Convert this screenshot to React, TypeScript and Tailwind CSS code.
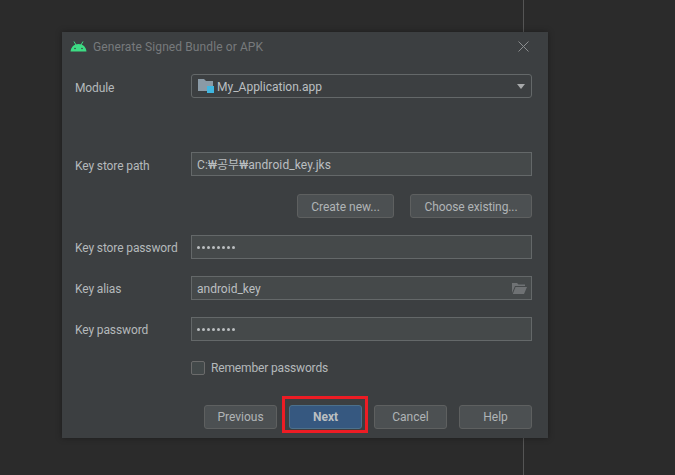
import { ReactNode } from "react";

const Row = ({ label, children, low }: { label: string; children: ReactNode; low?: boolean }) => (
  <div className="flex items-center">
    <span className={low ? "w-[116px] pt-[3px] text-[12px] tracking-[-0.12px] text-[#b4b9bb]" : "w-[116px] pt-[1px] text-[12px] tracking-[-0.12px] text-[#b4b9bb]"}>
      {label}
    </span>
    <div className="flex-1">{children}</div>
  </div>
);

const Field = ({ children, icon }: { children: ReactNode; icon?: ReactNode }) => (
  <div className="flex h-6 items-center justify-between border border-[#646869] bg-[#45494a] pl-[5px] pr-1 text-[12px] text-[#bbbfc1]">
    <span className="pt-[1px]">{children}</span>
    {icon}
  </div>
);

const Dots = () => (
  <span className="flex gap-[2px] pb-[1px]">
    {[0, 1, 2, 3, 4, 5, 6, 7].map((i) => (
      <span key={i} className="h-[3px] w-[3px] rounded-full bg-[#bbbfc1]" />
    ))}
  </span>
);

const Btn = ({ label, primary }: { label: string; primary?: boolean }) => (
  <button
    className={
      primary
        ? "h-6 w-[73px] rounded-[3px] border border-[#4c708c] bg-[#365880] text-[12px] font-bold text-[#bbbfc1]"
        : "h-6 w-[73px] rounded-[3px] border border-[#5e6060] bg-[#4c5052] text-[12px] text-[#b0b4b6]"
    }
  >
    {label}
  </button>
);

const AndroidIcon = () => (
  <svg width="17" height="11" viewBox="0 0 17 11">
    <path d="M0.5 10.5C1 6 4 3 8.5 3S16 6 16.5 10.5Z" fill="#3ddc84" />
    <path d="M4 0.5L6 4M13 0.5L11 4" stroke="#3ddc84" strokeWidth="1" />
    <circle cx="5" cy="7.5" r="0.8" fill="#3c3f41" />
    <circle cx="12" cy="7.5" r="0.8" fill="#3c3f41" />
  </svg>
);

const ModuleIcon = () => (
  <svg width="16" height="14" viewBox="0 0 16 14" className="shrink-0">
    <path d="M0 0H6L8 2H15V12H0Z" fill="#8a9aa6" />
    <rect x="9" y="7" width="7" height="7" fill="#40b6e0" />
  </svg>
);

const FolderIcon = () => (
  <svg width="15" height="12" viewBox="0 0 15 12">
    <path d="M0 1H5L6.5 2.5H13V4H3L0 11Z" fill="#6f7274" />
    <path d="M3.5 5H15L12 12H0.8Z" fill="#6f7274" />
  </svg>
);

export default function App() {
  return (
    <div
      className="relative h-[475px] w-[675px] overflow-hidden bg-[#2b2b2b] pl-[62px] pt-8"
      style={{ fontFamily: 'Roboto, "Noto Sans CJK KR", sans-serif' }}
    >
      {/* editor divider behind the dialog */}
      <div className="absolute bottom-0 left-[523px] top-0 w-px bg-[#555555]" />

      <div className="relative flex h-[406px] w-[486px] flex-col bg-[#3c3f41] shadow-[0_0_6px_rgba(0,0,0,0.35)]">
        {/* Title bar */}
        <div className="flex h-[28px] items-center justify-between pl-2 pr-[19px] pt-[1px]">
          <div className="flex items-center gap-[6px]">
            <AndroidIcon />
            <span className="pt-[1px] text-[12px] tracking-[0.1px] text-[#777a7c]">Generate Signed Bundle or APK</span>
          </div>
          <svg width="11" height="11" viewBox="0 0 11 11">
            <path d="M0.5 0.5L10.5 10.5M10.5 0.5L0.5 10.5" stroke="#8a8d8f" strokeWidth="1" />
          </svg>
        </div>

        <div className="flex flex-col pl-[13px] pr-4 pt-[14px]">
          <Row label="Module" low>
            <div className="flex h-6 items-center gap-[3px] rounded-[3px] border border-[#646869] bg-[#3c3f41] pl-[6px] pr-[6px] text-[12px] text-[#bbbfc1]">
              <ModuleIcon />
              <span className="flex-1 pt-[1px]">My_Application.app</span>
              <span className="h-0 w-0 border-x-[4.5px] border-t-[5px] border-x-transparent border-t-[#a7a9aa]" />
            </div>
          </Row>

          <div className="mt-[54px]">
            <Row label="Key store path" low>
              <Field>
                <span className="tracking-[0.1px]">C:₩공부₩android_key.jks</span>
              </Field>
            </Row>
          </div>

          <div className="mt-[18px] flex justify-end gap-4">
            <button className="h-6 w-[97px] rounded-[3px] border border-[#5e6060] bg-[#4c5052] pt-[1px] text-[12px] text-[#b0b4b6]">
              Create new...
            </button>
            <button className="h-6 w-[122px] rounded-[3px] border border-[#5e6060] bg-[#4c5052] pt-[1px] text-[12px] tracking-[-0.1px] text-[#b0b4b6]">
              Choose existing...
            </button>
          </div>

          <div className="mt-[17px] flex flex-col gap-[17px]">
            <Row label="Key store password">
              <Field>
                <Dots />
              </Field>
            </Row>
            <Row label="Key alias">
              <Field icon={<FolderIcon />}>android_key</Field>
            </Row>
            <Row label="Key password">
              <Field>
                <Dots />
              </Field>
            </Row>
          </div>

          <div className="ml-[116px] mt-[18px] flex items-center gap-[6px]">
            <span className="h-[14px] w-[14px] rounded-[2px] border border-[#6b6b6b] bg-[#43494a]" />
            <span className="text-[12px] tracking-[-0.15px] text-[#b4b9bb]">Remember passwords</span>
          </div>

          <div className="mt-7 flex justify-end gap-3">
            <Btn label="Previous" />
            <Btn label="Next" primary />
            <Btn label="Cancel" />
            <Btn label="Help" />
          </div>
        </div>

        {/* annotation box around Next */}
        <div className="absolute left-[220px] top-[364px] h-[37px] w-[86px] border-[3px] border-[#ed1c24]" />
      </div>
    </div>
  );
}
